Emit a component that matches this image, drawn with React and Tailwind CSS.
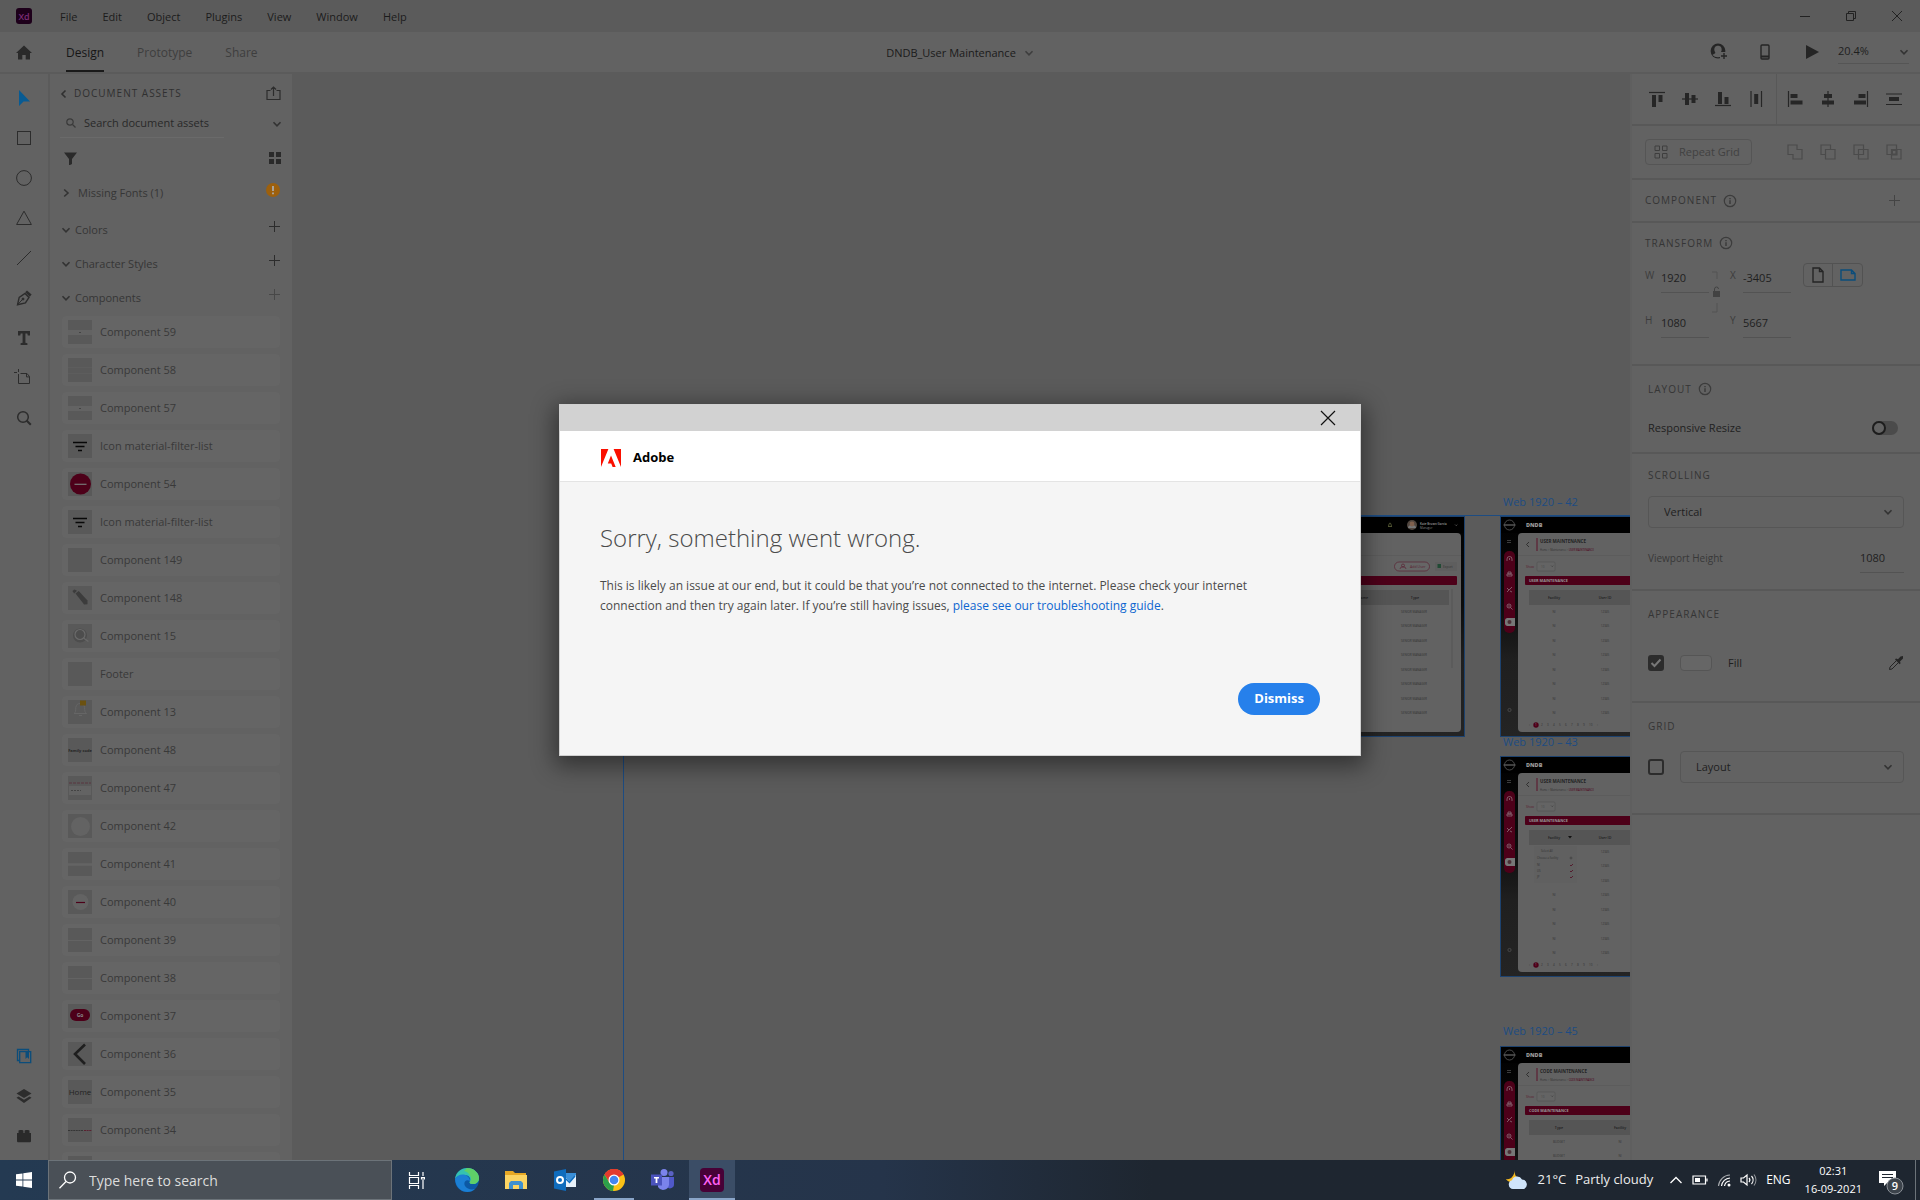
import React from "react";

const COMPONENTS = [
  { name: "Component 59", thumb: "band" },
  { name: "Component 58", thumb: "soft" },
  { name: "Component 57", thumb: "band" },
  { name: "Icon material-filter-list", thumb: "filter" },
  { name: "Component 54", thumb: "minus" },
  { name: "Icon material-filter-list", thumb: "filter" },
  { name: "Component 149", thumb: "blank" },
  { name: "Component 148", thumb: "pencil" },
  { name: "Component 15", thumb: "search" },
  { name: "Footer", thumb: "blank" },
  { name: "Component 13", thumb: "bell" },
  { name: "Component 48", thumb: "family" },
  { name: "Component 47", thumb: "field" },
  { name: "Component 42", thumb: "circle" },
  { name: "Component 41", thumb: "thickline" },
  { name: "Component 40", thumb: "minusLight" },
  { name: "Component 39", thumb: "line" },
  { name: "Component 38", thumb: "line" },
  { name: "Component 37", thumb: "go" },
  { name: "Component 36", thumb: "back" },
  { name: "Component 35", thumb: "home" },
  { name: "Component 34", thumb: "crumb" },
  { name: "", thumb: "blank" },
];

function Svg({ size = 16, w, h, children, className = "", ...rest }) {
  const width = w || size;
  const height = h || size;
  return (
    <svg width={width} height={height} viewBox={`0 0 ${width} ${height}`} fill="none" stroke="currentColor"
      className={`shrink-0 ${className}`} aria-hidden="true" {...rest}>
      {children}
    </svg>
  );
}

const Chevron = ({ className = "text-[#333]" }) => (
  <Svg w={10} h={10} className={className} strokeWidth="1.6"><path d="M1.5 3.2 5 6.8l3.5-3.6" /></Svg>
);
const ChevronRight = () => (
  <Svg w={10} h={10} className="text-[#333]" strokeWidth="1.6"><path d="M3.2 1.5 7 5 3.2 8.5" /></Svg>
);
const Plus = ({ className = "text-[#2c2c2c]" }) => (
  <Svg size={11} className={className}><path d="M5.5 0v11M0 5.5h11" /></Svg>
);
const Info = () => (
  <Svg size={14} className="text-[#3c3c3c]" strokeWidth="1.2">
    <circle cx="7" cy="7" r="5.7" />
    <path d="M7 6.2v3.8M7 4v1.3" strokeWidth="1.5" />
  </Svg>
);

function XdMark({ className }) {
  return (
    <span className={`flex shrink-0 items-center justify-center font-semibold leading-none ${className}`}>Xd</span>
  );
}

const TOOLS = [
  { label: "Select", color: "text-[#085b93]", art: <path d="M3 0v16l4.500-4.500H14z" fill="currentColor" stroke="none" /> },
  { label: "Rectangle", art: <rect x="1.5" y="1.5" width="13" height="13" /> },
  { label: "Ellipse", art: <circle cx="8" cy="8" r="7.4" /> },
  { label: "Polygon", art: <path d="M8 1.2 15.4 14.5H.6z" /> },
  { label: "Line", art: <path d="M1 15 15 1" /> },
  {
    label: "Pen",
    art: (
      <g>
        <path d="M1.5 14.8 3.2 7.4 9 3.4l4 4-3.6 5.6z" strokeWidth="1.4" />
        <path d="m1.5 14.8 5-5.4" />
        <circle cx="7" cy="9" r="1" fill="currentColor" />
        <path d="m9.2 2.2 1.8-1.8 4.6 4.2-1.8 2.2z" fill="currentColor" stroke="none" />
      </g>
    ),
  },
  { label: "Text", art: <path d="M2 1h12v4.400h-2.200l-.5-2H9.400v9.400l2 .5V15H4.600v-1.700l2-.5V3.400H4.700l-.5 2H2z" fill="currentColor" stroke="none" /> },
  { label: "Artboard", art: <path d="M2.500 4v9.500h11v-7L11 3.500H4.500M2.500-1v3M-2 2.500h3M10.500 3.500v3.400h3" /> },
  { label: "Zoom", art: <g strokeWidth="1.5"><circle cx="7" cy="7" r="5.3" /><path d="m10.8 10.8 4 4" strokeWidth="2" /></g> },
];

function ToolRail() {
  return (
    <nav className="flex w-[50px] shrink-0 flex-col items-center border-r-2 border-[#5b5b5b] bg-[#626262] pt-1" aria-label="Tools">
      {TOOLS.map((t) => (
        <button key={t.label} aria-label={t.label} className={`flex h-10 w-full items-center justify-center ${t.color || "text-[#2c2c2c]"}`}>
          <Svg size={16} className="overflow-visible">{t.art}</Svg>
        </button>
      ))}
      <div className="mt-auto w-full pb-1">
        <button aria-label="Document assets" className="flex h-10 w-full items-center justify-center text-[#0b4d7b]">
          <Svg size={16} strokeWidth="1.3">
            <path d="M3 12.5H1.5v-11h11V3M3.7 3.7h11v11h-11z" />
            <path d="M9.500 4h3.500v7l-1.800-1.700L9.500 11z" fill="currentColor" stroke="none" />
          </Svg>
        </button>
        <button aria-label="Layers" className="flex h-10 w-full items-center justify-center text-[#2c2c2c]">
          <Svg size={16} fill="currentColor" stroke="none">
            <path d="m8 1 7.500 4.500L8 10 .5 5.500z" />
            <path d="m2.500 8.400 5.500 3.300 5.500-3.300 2 1.400L8 15 .5 9.800z" />
          </Svg>
        </button>
        <button aria-label="Plugins" className="flex h-10 w-full items-center justify-center text-[#2a2a2a]">
          <Svg size={16} fill="currentColor" stroke="none">
            <path d="M1 5h1.500V2.500L4 2h2l1.400.5V5h1.200V2.500L10 2h2l1.500.5V5H15v8.500l-.8.8H1.800l-.8-.8z" />
          </Svg>
        </button>
      </div>
    </nav>
  );
}

const THUMBS = {
  blank: null,
  band: <g><path d="M0 12.500h24" stroke="#636363" strokeWidth="5" /><path d="M11 12.500h2" stroke="#444" /></g>,
  soft: <path d="M0 9.500h24M0 15.500h24" stroke="#5d5d5d" />,
  filter: <g stroke="#080808" strokeWidth="1.600"><path d="M5 8.500h14M7.500 12.500h9M10 16.500h4" /></g>,
  minus: <g><circle cx="12.500" cy="12" r="10.500" fill="#4d0019" /><path d="M6.500 12.300h12" stroke="#777" strokeWidth="1.200" /></g>,
  pencil: <g fill="#3c3c3c"><path d="m7.500 7.500 3.200-2.400 8.800 9.400v3.800l-3.400.2z" /><path d="m4.400 5 2-1.600L9 4.800 6.200 7.400z" /></g>,
  search: <g><circle cx="12" cy="11.500" r="7" fill="#4d4d4d" /><g stroke="#6a6a6a" strokeWidth="1.200"><circle cx="12" cy="10.500" r="5" /><path d="m15.800 14.200 4.600 3.200" /></g></g>,
  bell: <g><path d="M6 13.500c2-1 1.600-3 1.800-6 .5-3 2-4 4.400-4s4 1.200 4.400 4c.2 3 0 5 2 6zM11 15.500h3" stroke="#666" /><path d="M12 .5h6v5h-6z" fill="#6b5110" /></g>,
  family: <text x="12" y="14" textAnchor="middle" fontSize="4" fontWeight="700" fill="#242424">Family code</text>,
  field: <g><path d="M1 7h22" stroke="#5a3640" strokeDasharray="3 1" /><rect x="1" y="10" width="22" height="9" fill="#636363" /><path d="M3 14.500h10" stroke="#444" strokeDasharray="2 1" /></g>,
  circle: <circle cx="12.500" cy="12.500" r="9.500" fill="#636363" />,
  thickline: <path d="M0 12.500h24" stroke="#646464" strokeWidth="2.500" />,
  minusLight: <g><circle cx="12.500" cy="12" r="8" fill="#636363" /><path d="M8 12.500h9" stroke="#4d0019" strokeWidth="1.200" /></g>,
  line: <path d="M0 12.500h24" stroke="#636363" />,
  go: <g><rect x="2" y="5" width="20" height="12" rx="6" fill="#4d0019" /><text x="12" y="13" textAnchor="middle" fontSize="5" fontWeight="700" fill="#888">Go</text></g>,
  back: <path d="M17 2.500 7 12l10 10" stroke="#1f1f1f" strokeWidth="2.600" />,
  home: <text x="12" y="15" textAnchor="middle" fontSize="8" fill="#222">Home</text>,
  crumb: <g strokeDasharray="2 .6"><path d="M0 12.500h15" stroke="#353535" /><path d="M16 12.500h8" stroke="#5a2030" /></g>,
};

function AssetGroup({ title, plus }) {
  return (
    <div className="flex h-[34px] items-center pl-[11px] pr-3">
      <button className="flex items-center gap-1 text-[11px] text-[#363636]"><Chevron />{title}</button>
      <button className="mb-2 ml-auto" aria-label={`Add ${title}`}><Plus className={plus} /></button>
    </div>
  );
}

function AssetsPanel() {
  return (
    <aside className="flex w-[242px] shrink-0 flex-col overflow-hidden bg-[#626262]">
      <div className="flex h-[35px] shrink-0 items-center gap-1.5 pl-[9px] pr-[11px] pt-1">
        <button className="flex items-center gap-1.5 text-[10px] tracking-widest text-[#303030]">
          <Svg w={9} h={10} strokeWidth="1.600"><path d="M6.500 1.500 3 5l3.500 3.500" /></Svg>
          DOCUMENT ASSETS
        </button>
        <button className="ml-auto text-[#2c2c2c]" aria-label="Share assets">
          <Svg size={15} strokeWidth="1.200"><path d="M4.500 4.500H1v9h13v-9h-3.500M7.500 10V1M5 3.500 7.500 1 10 3.500" /></Svg>
        </button>
      </div>
      <div className="flex h-[29px] shrink-0 items-center px-2.5">
        <label className="flex h-full w-[164px] items-center gap-2 border-b border-[#6a6a6a] pl-1.5">
          <Svg size={10} className="text-[#3a3a3a]" strokeWidth="1.200"><circle cx="4" cy="4" r="3.200" /><path d="m6.500 6.500 3 3" /></Svg>
          <input aria-label="Search document assets" placeholder="Search document assets"
            className="w-full bg-transparent text-[11px] placeholder:text-[#292929] focus:outline-none" />
        </label>
        <button className="ml-auto" aria-label="Asset source"><Chevron /></button>
      </div>
      <div className="flex h-10 shrink-0 items-center pl-[14px] pr-[11px] text-[#2a2a2a]">
        <button aria-label="Filter"><Svg size={13} fill="currentColor" stroke="none"><path d="M0 .5h13L8 7v5l-3 1.500V7z" /></Svg></button>
        <button className="ml-auto" aria-label="Grid view">
          <Svg size={12} fill="currentColor" stroke="none"><path d="M0 0h5v5H0zM7 0h5v5H7zM0 7h5v5H0zM7 7h5v5H7z" /></Svg>
        </button>
      </div>
      <div className="flex h-[30px] shrink-0 items-center pl-[11px] pr-3">
        <button className="flex items-center gap-[7px] text-[11px] text-[#363636]"><ChevronRight />Missing Fonts (1)</button>
        <Svg size={14} className="mb-1.5 ml-auto"><circle cx="7" cy="7" r="7" fill="#9d600d" stroke="none" /><path d="M7 3v5M7 9.500v1.800" stroke="#aaa" strokeWidth="1.800" /></Svg>
      </div>
      <div className="shrink-0 pb-px pt-[5px]">
        <AssetGroup title="Colors" />
        <AssetGroup title="Character Styles" />
        <AssetGroup title="Components" plus="text-[#484848]" />
      </div>
      <ul className="flex flex-col gap-1.5 px-3">
        {COMPONENTS.map((c, i) => (
          <li key={i} className="flex h-8 shrink-0 items-center gap-2 rounded-sm bg-[#656565] pl-1.5 text-[11px] text-[#393939]">
            <span className="h-6 w-6 bg-[#595959]"><Svg size={24} stroke="none">{THUMBS[c.thumb]}</Svg></span>
            {c.name}
          </li>
        ))}
      </ul>
    </aside>
  );
}

const ROWS = [97, 111, 126, 140, 155, 169, 184, 198];

function BoardShell({ id, children }) {
  return (
    <svg width="392" height="221" viewBox="0 0 392 221" className="block" aria-hidden="true" fontFamily="Open Sans, sans-serif">
      <defs>
        <linearGradient id={id} x1="0" y1="0" x2="0" y2="1">
          <stop offset="0" stopColor="#000" /><stop offset=".4" stopColor="#0c0c0c" /><stop offset=".65" stopColor="#1f1f1f" /><stop offset="1" stopColor="#242424" />
        </linearGradient>
      </defs>
      <rect x=".5" y=".5" width="391" height="220" fill={`url(#${id})`} stroke="#1d426e" />
      <path d="M1 1h390v16H1z" fill="#000" />
      <rect x="18" y="17" width="370" height="199" rx="4" fill="#626262" />
      <path d="M18 39.500h370" stroke="#5c5c5c" />
      {children}
    </svg>
  );
}

function ListBoard({ id, title, cols, colX, popup, cells, rows = ROWS }) {
  return (
    <BoardShell id={id}>
      <circle cx="9.500" cy="9" r="5" fill="none" stroke="#666" strokeWidth=".7" />
      <path d="M3.500 9h12" stroke="#555" strokeWidth="1.500" />
      <text x="26" y="11" fontSize="5.500" fontWeight="800" fill="#999">DNDB</text>
      <path d="M7 24.500h4M7 26.500h4" stroke="#555" strokeWidth=".7" />
      <rect x="4" y="35" width="11" height="82" rx="5" fill="#4d0019" />
      <g fill="none" stroke="#8a7078" strokeWidth=".8">
        <path d="M7 45v-2a2.500 2.500 0 0 1 5 0v2M9.500 44v-2" />
        <path d="M7 60v-2h5v2zM8 58v-2h3v2z" />
        <path d="m7 76 5-5M7 72l2 2M10 75l2 1" />
        <circle cx="9" cy="90" r="2" /><path d="m10.500 91.500 2 2M8 90h2" />
      </g>
      <path d="M7 102h8v8H7a2.500 2.500 0 0 1-2-2v-4a2.500 2.500 0 0 1 2-2z" fill="#777" />
      <circle cx="9.500" cy="106" r="2" fill="#4d3038" />
      <circle cx="9.500" cy="194" r="1.600" fill="none" stroke="#555" strokeWidth=".7" />
      <path d="m29 26-2.500 2.500L29 31" fill="none" stroke="#222" strokeWidth=".8" />
      <path d="M37 22v13" stroke="#5a1028" />
      <text x="40" y="27" fontSize="4.500" fontWeight="700" fill="#222">{title}</text>
      <text x="40" y="34.500" fontSize="2.600" fill="#333">Home &gt; Maintenance &gt; <tspan fill="#4d0019">{title}</tspan></text>
      <text x="26" y="51.500" fontSize="3.200" fill="#5a2030">Show</text>
      <rect x="37" y="46" width="18" height="9" rx="1" fill="#646464" stroke="#505050" strokeWidth=".6" />
      <text x="41" y="51.800" fontSize="3" fill="#444">10</text>
      <path d="m51 49.500 1.200 1.200 1.200-1.200" fill="none" stroke="#333" strokeWidth=".5" />
      <rect x="25" y="60" width="360" height="9" rx="1" fill="#4d0019" />
      <text x="29" y="66" fontSize="3.800" fontWeight="700" fill="#999">{title}</text>
      <rect x="29" y="74" width="350" height="15" fill="#555" />
      <g fontSize="3.600" fontWeight="600" fill="#1c1c1c" textAnchor="middle">
        <text x={colX[0]} y="83">{cols[0]}</text><text x={colX[1]} y="83">{cols[1]}</text>
      </g>
      <g fontSize="3" fill="#333" textAnchor="middle">
        {rows.map((y, i) => (
          <React.Fragment key={y}>
            {!(popup && i < 3) && <text x={colX[0]} y={y}>{cells[0]}</text>}
            <text x={colX[1]} y={y}>{cells[1]}</text>
          </React.Fragment>
        ))}
      </g>
      {popup && (
        <g>
          <path d="M68 80h4l-2 2.500z" fill="#111" />
          <rect x="34" y="90" width="43" height="37" fill="#606060" />
          <g fontSize="2.800" fill="#333">
            <text x="41" y="96">Select All</text><text x="37" y="103">Choose a facility</text>
            <text x="37" y="110">NI</text><text x="37" y="116">US</text><text x="37" y="122">JP</text>
          </g>
          <path d="m70 109 1 1 2-2M70 115l1 1 2-2M70 121l1 1 2-2" fill="none" stroke="#4d0019" strokeWidth=".7" />
          <circle cx="71" cy="102" r="1" fill="none" stroke="#333" strokeWidth=".5" />
        </g>
      )}
      {rows === ROWS && (
        <g fontSize="3" fill="#333">
          <circle cx="36" cy="209" r="2.700" fill="#4d0019" />
          <text x="29" y="210">‹</text>
          <text x="35" y="210" fill="#999">1</text>
          {[2, 3, 4, 5, 6, 7, 8, 9, 10].map((n, i) => <text key={n} x={41 + i * 6} y="210">{n}</text>)}
          <text x="97" y="210">›</text>
        </g>
      )}
    </BoardShell>
  );
}

// only the right-hand end of this board is visible beside the dialog
function ManagerBoard() {
  return (
    <BoardShell id="bg41">
      <path d="M315 10.500h4M315.500 10c.5-1 .5-3 1.500-3s1 2 1.500 3" fill="none" stroke="#666b40" strokeWidth=".8" />
      <circle cx="339" cy="9" r="5" fill="#51463f" />
      <path d="M335 12a4 3 0 0 1 8 0z" fill="#777" /><circle cx="339" cy="8" r="2.400" fill="#80604d" />
      <text x="347" y="9" fontSize="3" fontWeight="600" fill="#999">Kate Brown Garcia</text>
      <text x="347" y="13" fontSize="3" fill="#888">Manager</text>
      <path d="m382 8.500 1.200 1.200 1.200-1.200" fill="none" stroke="#777" strokeWidth=".6" />
      <rect x="321.500" y="46" width="35" height="9" rx="4.500" fill="#666" stroke="#5a2334" strokeWidth=".7" />
      <circle cx="330" cy="49.500" r="1.500" fill="none" stroke="#5a2334" strokeWidth=".7" />
      <path d="M327 53a3 2.200 0 0 1 6 0" fill="none" stroke="#5a2334" strokeWidth=".7" />
      <text x="337" y="52" fontSize="3.600" fill="#5a2334">Add User</text>
      <rect x="362" y="46" width="22" height="9" rx="1" fill="#5e5e5e" />
      <path d="M364.500 48h3.500v4h-3.500z" fill="#214a34" />
      <text x="370" y="52" fontSize="3.200" fill="#333">Export</text>
      <rect x="5" y="60" width="379" height="9" rx="1" fill="#4d0019" />
      <rect x="5" y="74" width="371" height="15" fill="#555" />
      <text x="342" y="83" fontSize="3.600" fontWeight="600" fill="#1c1c1c" textAnchor="middle">Type</text>
      <text x="290" y="83" fontSize="3.600" fontWeight="600" fill="#1c1c1c" textAnchor="middle">Name</text>
      <g fontSize="3" fill="#333" textAnchor="middle">
        {ROWS.map((y) => <text key={y} x="341" y={y}>SENIOR MANAGER</text>)}
      </g>
      <path d="M379 73v79" stroke="#555" />
    </BoardShell>
  );
}

function Canvas() {
  return (
    <main className="relative min-w-0 flex-1 overflow-hidden bg-[#5b5b5b] text-[11px] text-[#1d4c82]">
      <div className="absolute bottom-0 left-[331px] right-0 top-[441px] border-l border-t border-[#1d4c82]" />
      <div className="absolute left-[781px] top-[442px]"><ManagerBoard /></div>
      <span className="absolute left-[1211px] top-[420px]">Web 1920 – 42</span>
      <div className="absolute left-[1208px] top-[442px]">
        <ListBoard id="bg42" title="USER MAINTENANCE" cols={["Facility", "User ID"]} colX={[54, 105]} cells={["NI", "12345"]} />
      </div>
      <span className="absolute left-[1211px] top-[660px]">Web 1920 – 43</span>
      <div className="absolute left-[1208px] top-[682px]">
        <ListBoard id="bg43" title="USER MAINTENANCE" cols={["Facility", "User ID"]} colX={[54, 105]} cells={["NI", "12345"]} popup />
      </div>
      <span className="absolute left-[1211px] top-[949px]">Web 1920 – 45</span>
      <div className="absolute left-[1208px] top-[972px]">
        <ListBoard id="bg45" title="CODE MAINTENANCE" cols={["Type", "Facility"]} colX={[59, 120]} cells={["BUDGET", "NI"]} rows={ROWS.slice(0, 2)} />
      </div>
    </main>
  );
}

const ALIGN_V = [
  ["Align top", <g><path d="M0 1.500h16" /><path d="M3 4h4v12H3zM9.500 4h4v7h-4z" fill="currentColor" stroke="none" /></g>],
  ["Align middle", <g><path d="M0 8h16" /><path d="M3 2h4v12H3zM9.500 4h4v8h-4z" fill="currentColor" stroke="none" /></g>],
  ["Align bottom", <g><path d="M0 14.500h16" /><path d="M3 1h4v12H3zM9.500 6h4v7h-4z" fill="currentColor" stroke="none" /></g>],
  ["Distribute horizontally", <g><path d="M3 0v16M13.500 0v16" /><path d="M6.200 3h4v10h-4z" fill="currentColor" stroke="none" /></g>],
];
const ALIGN_H = [
  ["Align left", <g><path d="M1.500 0v16" /><path d="M3.500 3h7v4h-7zM3.500 9.500h12v4h-12z" fill="currentColor" stroke="none" /></g>],
  ["Align center", <g><path d="M8 0v16" /><path d="M4 3h8v4H4zM2 9.500h12v4H2z" fill="currentColor" stroke="none" /></g>],
  ["Align right", <g><path d="M14.500 0v16" /><path d="M5.500 3h7v4h-7zM1 9.500h12v4H1z" fill="currentColor" stroke="none" /></g>],
  ["Distribute vertically", <g><path d="M0 3h16M0 13.500h16" /><path d="M3 6h10v4H3z" fill="currentColor" stroke="none" /></g>],
];
const BOOLEANS = [
  ["Add", <path d="M1 1h9v4.500h5V15H6v-4.500H1z" />],
  ["Subtract", <path d="M5 10.500H1V1h9.500v4M5.500 5.500H15V15H5.500z" />],
  ["Intersect", <path d="M1 1h9.500v9.500H1zM5.500 5.500H15V15H5.500z" />],
  ["Exclude overlap", <g><path d="M1 1h9.500v9.500H1zM5.500 5.500H15V15H5.500z" /><path d="M6 6h4.500v4.500H6z" strokeWidth="2" /></g>],
];

function IconRow({ items, className }) {
  return (
    <div className={`flex items-center ${className}`}>
      {items.map(([label, art]) => (
        <button key={label} aria-label={label}><Svg size={16} strokeWidth="1.200">{art}</Svg></button>
      ))}
    </div>
  );
}

const Heading = ({ children, info }) => (
  <div className="flex h-5 items-center gap-1.5 text-[10px] tracking-widest text-[#353535]">
    <h2>{children}</h2>{info && <Info />}
  </div>
);

const NumberField = ({ label, value, labelWidth = "w-4" }) => (
  <label className="flex items-start text-[10px] text-[#3c3c3c]">
    <span className={`leading-6 ${labelWidth}`}>{label}</span>
    <input defaultValue={value} className="h-[30px] w-12 border-b border-[#535353] bg-transparent text-[11px] text-[#1f1f1f] focus:outline-none" />
  </label>
);

const Dropdown = ({ label, value }) => (
  <div className="flex h-8 min-w-0 flex-1 items-center rounded border border-[#565656] pr-2.5">
    <select aria-label={label} className="min-w-0 flex-1 appearance-none bg-transparent pl-[15px] text-[11px] text-[#1f1f1f]">
      <option>{value}</option>
    </select>
    <Chevron />
  </div>
);

const Check = ({ label, checked }) => (
  <span className="grid h-4 w-4 shrink-0">
    <input type="checkbox" aria-label={label} defaultChecked={checked}
      className="col-start-1 row-start-1 h-4 w-4 appearance-none rounded-[3px] border-2 border-[#2c2c2c] checked:bg-[#2c2c2c]" />
    {checked && <Svg size={16} className="pointer-events-none col-start-1 row-start-1 text-[#777]" strokeWidth="2"><path d="m3.500 8 3 3 6-6.500" /></Svg>}
  </span>
);

function Inspector() {
  return (
    <aside className="w-[290px] shrink-0 border-l-2 border-[#5f5f5f] bg-[#626262]">
      <div className="flex h-[52px] border-b-2 border-[#585858] text-[#262626]">
        <IconRow items={ALIGN_V} className="w-[145px] gap-[17px] border-r border-[#585858] pl-[17px]" />
        <IconRow items={ALIGN_H} className="gap-[17px] pl-[10px]" />
      </div>
      <div className="flex h-[54px] items-center border-b-2 border-[#585858] pl-[13px]">
        <button className="flex h-[26px] w-[107px] items-center gap-[11px] rounded border border-[#555] pl-2 text-[11px] text-[#414141]">
          <Svg size={14} className="text-[#3e3e3e]"><path d="M1 1h4.500v4.500H1zM8.500 1H13v4.500H8.500zM1 8.500h4.500V13H1zM8.500 8.500H13V13H8.500z" /></Svg>
          Repeat Grid
        </button>
        <IconRow items={BOOLEANS} className="ml-[35px] gap-[17px] text-[#4b4b4b]" />
      </div>
      <div className="flex h-[43px] items-center border-b-2 border-[#585858] pl-[13px] pr-5">
        <Heading info>COMPONENT</Heading>
        <button className="ml-auto" aria-label="Add component"><Plus className="text-[#444]" /></button>
      </div>
      <section className="h-[143px] border-b-2 border-[#585858] pl-[13px] pt-2.5">
        <Heading info>TRANSFORM</Heading>
        <div className="flex items-start pt-2.5">
          <div className="flex flex-col gap-[15px]">
            <NumberField label="W" value="1920" />
            <NumberField label="H" value="1080" />
          </div>
          <Svg w={12} h={42} className="mt-2 text-[#525252]">
            <path d="M3 1h5v7M3 41h5v-9" />
            <path d="M4 20h7v6H4z" fill="#424242" stroke="none" /><path d="M5.500 20v-2a2 2 0 0 1 4 0" stroke="#424242" />
          </Svg>
          <div className="ml-[9px] flex flex-col gap-[15px]">
            <NumberField label="X" value="-3405" labelWidth="w-[13px]" />
            <NumberField label="Y" value="5667" labelWidth="w-[13px]" />
          </div>
          <div className="ml-3 flex h-6 rounded border border-[#525252]">
            <button className="flex w-[29px] items-center justify-center border-r border-[#525252] text-[#252525]" aria-label="Portrait">
              <Svg w={12} h={16} strokeWidth="1.400"><path d="M1 1h6.500L11 4.500V15H1zM7.500 1v3.500H11" /></Svg>
            </button>
            <button className="flex w-[29px] items-center justify-center text-[#0b4d7b]" aria-label="Landscape">
              <Svg w={16} h={12} strokeWidth="1.400"><path d="M1 1h10.500L15 4.500V11H1zM11.500 1v3.500H15" /></Svg>
            </button>
          </div>
        </div>
      </section>
      <section className="h-[88px] border-b-2 border-[#585858] px-4 pt-[13px]">
        <Heading info>LAYOUT</Heading>
        <label className="flex items-center pr-1.5 pt-5 text-[11px] leading-[18px] text-[#1f1f1f]">
          Responsive Resize
          <span className="ml-auto flex h-3.5 w-[26px] rounded-full bg-[#4b4b4b]">
            <input type="checkbox" role="switch" className="h-3.5 w-3.5 appearance-none rounded-full border-2 border-[#1d1d1d] bg-[#626262]" />
          </span>
        </label>
      </section>
      <section className="h-[137px] border-b-2 border-[#585858] px-4 pt-[11px]">
        <Heading>SCROLLING</Heading>
        <div className="flex pt-[11px]"><Dropdown label="Scrolling" value="Vertical" /></div>
        <label className="flex items-center justify-between pt-[15px] text-[10px] text-[#383838]">
          Viewport Height
          <input defaultValue="1080" className="h-[30px] w-11 border-b border-[#535353] bg-transparent text-[11px] text-[#1f1f1f] focus:outline-none" />
        </label>
      </section>
      <section className="h-[112px] border-b-2 border-[#585858] px-4 pt-[13px]">
        <Heading>APPEARANCE</Heading>
        <div className="flex items-center gap-4 pt-[31px] text-[11px] text-[#1f1f1f]">
          <Check label="Fill" checked />
          <button className="h-4 w-8 rounded-sm border border-[#555] bg-[#666]" aria-label="Fill color" />
          <span className="leading-4">Fill</span>
          <button className="ml-auto text-[#252525]" aria-label="Pick color">
            <Svg size={16}><path d="M8.500 5.500 2 12l-.5 2.500L4 14l6.500-6.500" /><path d="m7 4.500 1-1 2 .8L12.500 1.500 15 1l0 2.500-3 3 .6 1.800-1 1z" fill="currentColor" stroke="none" /></Svg>
          </button>
        </div>
      </section>
      <section className="h-[112px] border-b-2 border-[#585858] px-4 pt-[13px]">
        <Heading>GRID</Heading>
        <div className="flex items-center gap-4 pt-[15px]">
          <Check label="Show grid" />
          <Dropdown label="Grid type" value="Layout" />
        </div>
      </section>
    </aside>
  );
}

function TitleBar() {
  return (
    <header className="flex h-8 shrink-0 items-center bg-[#5b5b5b] pl-4 text-[11px] text-[#1b1b1b]">
      <XdMark className="h-4 w-4 rounded-[3px] bg-[#1d001a] text-[9px] text-[#7c2d77]" />
      <nav className="flex gap-[25px] pl-7 pt-0.5" aria-label="Main menu">
        {["File", "Edit", "Object", "Plugins", "View", "Window", "Help"].map((m) => <button key={m}>{m}</button>)}
      </nav>
      <div className="ml-auto flex text-[#222]">
        <button className="flex w-[46px] justify-center" aria-label="Minimize"><Svg size={12}><path d="M1 6.500h10" /></Svg></button>
        <button className="flex w-[46px] justify-center" aria-label="Restore"><Svg size={12}><path d="M1.500 3.500h7v7h-7zM3.500 3V1.500h7v7H9" /></Svg></button>
        <button className="flex w-[46px] justify-center" aria-label="Close window"><Svg size={12}><path d="m1 1 10 10M11 1 1 11" /></Svg></button>
      </div>
    </header>
  );
}

function Toolbar() {
  return (
    <div className="grid h-[42px] shrink-0 grid-cols-[1fr_auto_1fr] border-b-2 border-[#5b5b5b] bg-[#626262] text-[12px] text-[#3e3e3e]">
      <div className="flex pl-4">
        <button aria-label="Home" className="pt-0.5 text-[#2a2a2a]">
          <Svg size={16} fill="currentColor" stroke="none"><path d="m8 .5 8 7.500h-2v6.500H9.700V10H6.300v4.500H2V8H0z" /></Svg>
        </button>
        <nav className="flex gap-[33px] pl-[34px]" aria-label="Modes">
          <button className="border-b-2 border-[#1a1a1a] pt-1 text-[#161616]">Design</button>
          <button className="border-b-2 border-transparent pt-1">Prototype</button>
          <button className="border-b-2 border-transparent pt-1">Share</button>
        </nav>
      </div>
      <button className="flex items-center gap-2 pt-0.5 text-[11px] text-[#1b1b1b]">DNDB_User Maintenance<Chevron className="text-[#3e3e3e]" /></button>
      <div className="flex items-center justify-end pr-[11px] text-[#252525]">
        <button aria-label="Invite">
          <Svg size={18}>
            <circle cx="8" cy="8" r="7.400" fill="currentColor" stroke="none" />
            <path d="M8 2.800c3 0 4 2.300 3.600 4.600-.2 1-.9 1.800-1 2.400 0 .8 1.600 1.200 3 2.200A7.400 7.400 0 0 1 8 14.200 7.400 7.400 0 0 1 2.400 12c1.400-1 3-1.400 3-2.200-.1-.6-.8-1.400-1-2.400C4 5.100 5 2.800 8 2.800z" fill="#626262" stroke="none" />
            <path d="M10 9h8v9h-8z" fill="#626262" stroke="none" />
            <path d="M14 10v6M11 13h6" strokeWidth="1.400" />
          </Svg>
        </button>
        <button className="ml-8" aria-label="Device preview">
          <Svg w={10} h={16}><rect x="1" y="1" width="8" height="14" rx="1" strokeWidth="1.400" /><path d="M1 12.500h8" strokeWidth="2" /></Svg>
        </button>
        <button className="ml-9" aria-label="Play"><Svg w={13} h={14} fill="currentColor" stroke="none"><path d="M0 0v14l13-7z" /></Svg></button>
        <label className="ml-[19px] flex h-6 w-[71px] items-center border-b border-[#555]">
          <input aria-label="Zoom level" defaultValue="20.4%" className="w-full bg-transparent text-[11px] text-[#1f1f1f] focus:outline-none" />
          <Chevron />
        </label>
      </div>
    </div>
  );
}

function ErrorDialog() {
  return (
    <div className="absolute inset-0 flex items-center justify-center">
      <div role="dialog" aria-labelledby="error-title" className="w-[802px] border border-[#d0d0d0] bg-[#f5f5f5] shadow-[0_6px_22px_4px_rgba(0,0,0,0.45)]">
        <div className="flex h-[26px] items-center justify-end bg-[#d2d2d2] pr-6">
          <button aria-label="Close" className="text-[#111]"><Svg size={16} strokeWidth="1.200"><path d="m1 1 14 14M15 1 1 15" /></Svg></button>
        </div>
        <div className="flex h-[51px] items-center gap-3 border-b border-[#e4e4e4] bg-white pl-[41px] pt-1">
          <Svg w={20} h={18} stroke="none"><path d="M0 0h7.400L0 18zM12.600 0H20v18zM10 6.600 14.700 18h-3.100l-1.400-3.600H6.800z" fill="#fa0f00" /></Svg>
          <span className="text-[13px] font-bold text-black">Adobe</span>
        </div>
        <div className="px-10 pb-10 pt-9">
          <h1 id="error-title" className="text-[24px] font-light leading-10 text-[#4b4b4b]">Sorry, something went wrong.</h1>
          <p className="pt-[18px] text-[12px] leading-5 text-[#4b4b4b]">
            This is likely an issue at our end, but it could be that you’re not connected to the internet. Please check your internet
            <br />
            connection and then try again later. If you’re still having issues, <a href="#guide" className="text-[#0d66d0]">please see our troubleshooting guide</a>.
          </p>
          <div className="flex justify-end pt-[67px]">
            <button className="h-8 rounded-full bg-[#2680eb] px-4 text-[13px] font-bold text-white">Dismiss</button>
          </div>
        </div>
      </div>
    </div>
  );
}

const TASKS = [
  {
    label: "Microsoft Edge",
    art: (
      <g stroke="none">
        <circle cx="12" cy="12" r="12" fill="#0c59a4" />
        <path d="M0 11C1 4 6 0 12 0c7 0 12 5 12 10 0 4-3 6-6 6-4 0-4-2-3-3 1-3-1-6-6-6-4 0-7 1-9 4z" fill="#35c1b1" />
        <path d="M12 0c7 0 12 5 12 10 0 4-3 6-6 6-3 0-3.500-1-3-2 3-4-1-10-6-11 1-1 2-2 3-3z" fill="#5fd068" />
        <path d="M0 11c2-4 8-6 12-3 2 1 3 3 3 5-4-2-7 1-5 5 2 3 6 4 10 3-6 6-19 3-20-10z" fill="#1b7fd4" />
      </g>
    ),
  },
  {
    label: "File Explorer",
    art: (
      <g stroke="none">
        <path d="M1 3h8l2 2h11v16H1z" fill="#e8a824" /><path d="M1 7h22v14H1z" fill="#fcd462" />
        <path d="M5 21v-6l2-2h10l2 2v6h-4v-4H9v4z" fill="#3f90cf" />
      </g>
    ),
  },
  {
    label: "Outlook",
    art: (
      <g stroke="none">
        <path d="M11 5h12v14H11z" fill="#e8f1fa" /><path d="m12 9 5 5 6-7v-2H12z" fill="#3b8fd8" />
        <path d="m13 11 3.500 3.500L22 8" fill="none" stroke="#0f6cbd" strokeWidth="1.500" />
        <path d="M1 3.500 13 1v22L1 20.500z" fill="#0f6cbd" /><circle cx="7" cy="12" r="3" fill="none" stroke="#fff" strokeWidth="2" />
      </g>
    ),
  },
  {
    label: "Chrome", open: true,
    art: (
      <g stroke="none">
        <circle cx="12" cy="12" r="11" fill="#fbc116" />
        <path d="M12 12 2.500 6.500a11 11 0 0 1 19 0z" fill="#e33b2e" /><path d="M12 12v-5.500h9.500a11 11 0 0 0-19 0L7 14z" fill="#e33b2e" />
        <path d="M2.500 6.500 7.500 15 12 17l-1 6A11 11 0 0 1 2.500 6.500z" fill="#2c9f4b" />
        <circle cx="12" cy="12" r="5.500" fill="#fff" /><circle cx="12" cy="12" r="4.300" fill="#4486f0" />
      </g>
    ),
  },
  {
    label: "Teams",
    art: (
      <g stroke="none">
        <circle cx="20" cy="5.500" r="2.600" fill="#5b62c4" /><circle cx="13" cy="4.500" r="3.500" fill="#7b83eb" />
        <path d="M16 9h7v7a4 4 0 0 1-7 3z" fill="#5059c9" /><path d="M7 9h11v8a6 6 0 0 1-11 2z" fill="#7b83eb" />
        <path d="M0 6.500h11v11H0z" fill="#4b53bc" /><path d="M3 9h5v1.600H6.400V15H4.600v-4.400H3z" fill="#fff" />
      </g>
    ),
  },
];

function Taskbar() {
  return (
    <footer className="flex h-10 shrink-0 bg-linear-to-r from-[#243a52] via-[#25344a] via-46% to-[#1e2630] to-60% text-white">
      <button className="flex w-12 items-center justify-center" aria-label="Start">
        <Svg size={16} fill="currentColor" stroke="none"><path d="m0 2.300 6.500-.9v6.200H0zM7.300 1.300 16 0v7.600H7.300zM0 8.400h6.500v6.200L0 13.700zM7.300 8.400H16V16l-8.700-1.300z" /></Svg>
      </button>
      <label className="flex w-[344px] items-center gap-3 border border-[#6c7379] bg-[#4a5057] pl-2.5">
        <Svg size={18} strokeWidth="1.300"><circle cx="11" cy="6.500" r="5.500" /><path d="m7 10.500-6.500 6.800" /></Svg>
        <input placeholder="Type here to search" aria-label="Type here to search" className="w-full bg-transparent text-[14px] placeholder:text-[#dcdcdc] focus:outline-none" />
      </label>
      <button className="flex w-12 items-center justify-center" aria-label="Task view">
        <Svg size={17} strokeWidth="1.200"><path d="M1.500 0v3.500h9V0M1.500 17v-3.500h9V17M1.500 5.500h9v6h-9zM15 0v4M15 8v9M13.500 5.500h3v1.500h-3z" /></Svg>
      </button>
      <div className="flex gap-[9px] pl-[7px]">
        {TASKS.map((t) => (
          <button key={t.label} aria-label={t.label}
            className={`flex w-10 items-center justify-center border-y-2 border-t-transparent ${t.open ? "border-b-[#8aa5c8]" : "border-b-transparent"}`}>
            <Svg size={24}>{t.art}</Svg>
          </button>
        ))}
        <button aria-label="Adobe XD" className="-ml-[3px] flex w-[46px] items-center justify-center border-y-2 border-b-[#8aa5c8] border-t-[#3b4d66] bg-[#3b4d66]">
          <XdMark className="h-6 w-6 rounded bg-[#470137] text-[14px] text-[#ff61f6]" />
        </button>
      </div>
      <div className="ml-auto flex items-center">
        <button className="flex items-center gap-[9px] text-[13px] text-[#eee]">
          <Svg w={24} h={20} stroke="none"><path d="M10 0c-1 6 2 8 6 8-3 5-12 6-15 1 5 1 8-3 9-9z" fill="#f5b91e" /><path d="M8 19a4.500 4.500 0 0 1-1-8.800A5.500 5.500 0 0 1 17 9.500a5 5 0 0 1 2 9.500z" fill="#cfe4fa" /></Svg>
          <span>21°C</span><span>Partly cloudy</span>
        </button>
        <div className="flex items-center gap-[9px] pl-4">
          <Svg size={14} strokeWidth="1.300"><path d="m1.500 10 5.500-5.500 5.500 5.500" /></Svg>
          <Svg w={16} h={12} strokeWidth="1.200"><path d="M1 2h12.500v8H1zM15 4.500v3" /><path d="M3 4h5v4H3z" fill="currentColor" stroke="none" /></Svg>
          <Svg size={14} strokeWidth="1.200"><path d="M1.500 13A12 12 0 0 1 13 2" opacity=".6" /><path d="M4.500 13A9 9 0 0 1 13 5M7.500 13A6 6 0 0 1 13 8" /><circle cx="12" cy="12" r="1.500" fill="currentColor" stroke="none" /></Svg>
          <Svg w={17} h={14} strokeWidth="1.200"><path d="M1 5h2.500L7 2v10L3.500 9H1zM9 5a3 3 0 0 1 0 4M11.500 3a6 6 0 0 1 0 8" /><path d="M14 1.500a9 9 0 0 1 0 11" opacity=".5" /></Svg>
          <span className="text-[12px]">ENG</span>
        </div>
        <div className="pl-3.5 text-center text-[11px] leading-[18px]"><div>02:31</div><div>16-09-2021</div></div>
        <button className="ml-[17px] flex pt-1" aria-label="Notifications">
          <Svg w={26} h={26}>
            <path d="M0 2h17v12H8l-3 3v-3H0z" fill="#fff" stroke="none" /><path d="M3 5.500h11M3 8.500h11" stroke="#1e2630" />
            <circle cx="16" cy="17" r="8" fill="#3c434b" stroke="#8a9096" />
            <text x="16" y="21" textAnchor="middle" fontSize="11" fontWeight="600" fill="#fff" stroke="none">9</text>
          </Svg>
        </button>
        <span className="ml-2.5 mr-1 h-10 w-px bg-[#6c7379]" />
      </div>
    </footer>
  );
}

export default function App() {
  return (
    <div className="flex h-screen flex-col overflow-hidden bg-[#626262] font-['Open_Sans','Noto_Sans',sans-serif]">
      <div className="relative flex min-h-0 flex-1 flex-col">
        <TitleBar />
        <Toolbar />
        <div className="flex min-h-0 flex-1">
          <ToolRail />
          <AssetsPanel />
          <Canvas />
          <Inspector />
        </div>
        <ErrorDialog />
      </div>
      <Taskbar />
    </div>
  );
}
